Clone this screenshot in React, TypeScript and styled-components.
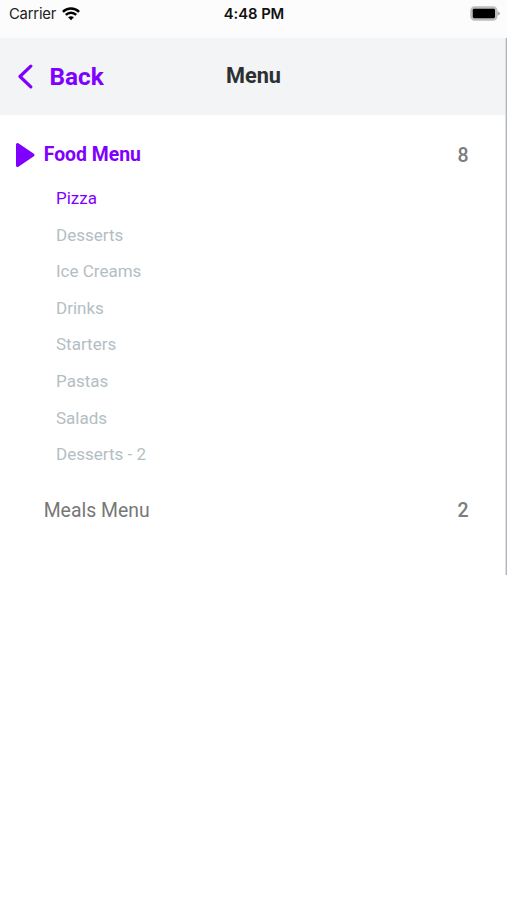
import React from "react";
import styled, { createGlobalStyle } from "styled-components";

const Global = createGlobalStyle`
  * { box-sizing: border-box; }
  body { margin: 0; background: #fff; }
`;
const Screen = styled.div`
  width: 507px; height: 900px; position: relative; overflow: hidden;
  background: #fff; font-family: Roboto, sans-serif;
`;
const StatusBar = styled.div`
  height: 38px; padding: 0 6px 10px 9px; display: grid;
  grid-template-columns: 1fr auto 1fr; align-items: center;
  font: 14.8px/28px Inter, sans-serif; color: #222; background: #fcfcfc;
`;
const Carrier = styled.div`
  display: flex; align-items: center; gap: 6px; letter-spacing: -0.2px;
`;
const Clock = styled.div`
  font-weight: 600; margin-right: 2px; letter-spacing: -0.05px; color: #111;
`;
const Battery = styled.div`
  display: flex; justify-content: flex-end; margin-top: -1px;
`;
const Header = styled.header`
  height: 77px; background: #f2f4f6; display: grid;
  grid-template-columns: 1fr auto 1fr; align-items: center; padding: 0 18px;
`;
const Back = styled.div`
  display: flex; align-items: center; gap: 17px;
  color: #8000ff; font-size: 24.4px; font-weight: 700;
`;
const BackLabel = styled.span`padding-bottom: 1px; margin-left: -0.5px;`;
const Title = styled.h1`
  margin: 0; padding-bottom: 2px; font-size: 21.7px; font-weight: 700; color: #2d2f31;
`;
const Section = styled.div<{ $active?: boolean }>`
  display: flex; align-items: center; height: 40px; padding: 0 38.5px 0 15px;
  font-size: 19.4px; font-weight: ${(p) => (p.$active ? 700 : 400)};
  color: ${(p) => (p.$active ? "#8000ff" : "#777")};
`;
const Marker = styled.div`width: 28.7px; display: flex;`;
const Count = styled.div`
  margin-left: auto; padding-top: 1px; font-size: 19.5px; font-weight: 500; color: #7c7c7c;
`;
const List = styled.ul`
  list-style: none; margin: 0; padding: 5.5px 0 17.5px 56px;
`;
const Item = styled.li<{ $active?: boolean }>`
  height: 36.6px; line-height: 36.6px; font-size: 17px;
  color: ${(p) => (p.$active ? "#8000ff" : "#b3bec3")};
`;
const Content = styled.main`padding-top: 19.5px;`;
const ScrollThumb = styled.div`
  position: absolute; right: 0; top: 38px; width: 2px; height: 537px;
  background: linear-gradient(to right, #dcdfe4 50%, #b0b6c0 50%);
`;

const items = ["Pizza", "Desserts", "Ice Creams", "Drinks", "Starters", "Pastas", "Salads", "Desserts - 2"];

export default function App() {
  return (
    <Screen>
      <Global />
      <StatusBar>
        <Carrier>
          Carrier
          <svg width="18" height="14" viewBox="0 0 18 14" fill="none" stroke="#000" strokeWidth="2.4">
            <path d="M.9 4.8C5.4.3 12.6.3 17.1 4.8M3.8 7.9C6.7 5 11.3 5 14.2 7.9" />
            <path d="M6.1 10.3Q9 8 11.9 10.3L9 13.3Z" fill="#000" stroke="none" />
          </svg>
        </Carrier>
        <Clock>4:48 PM</Clock>
        <Battery>
          <svg width="31" height="15" viewBox="0 0 31 15">
            <rect x=".9" y=".9" width="26" height="13.2" rx="3.8" fill="#bcbcbc" stroke="#bcbcbc" strokeWidth="1.2" />
            <rect x="2.8" y="2.8" width="22.2" height="9.4" rx="1.4" />
            <path d="M27.5 5L30.5 7.5L27.5 10Z" fill="#aaa" />
          </svg>
        </Battery>
      </StatusBar>
      <Header>
        <Back>
          <svg width="15" height="25" viewBox="0 0 15 25" fill="none" stroke="currentColor" strokeWidth="3.2" strokeLinecap="round" strokeLinejoin="round">
            <path d="M12.8 2.2L2 12.5L12.8 22.8" />
          </svg>
          <BackLabel>Back</BackLabel>
        </Back>
        <Title>Menu</Title>
        <span />
      </Header>
      <Content>
        <Section $active>
          <Marker>
            <svg width="20" height="26" viewBox="0 0 20 26" fill="currentColor" stroke="currentColor" strokeWidth="3" strokeLinejoin="round">
              <path d="M2.5 2.5V23.5L18 13Z" />
            </svg>
          </Marker>
          Food Menu<Count>8</Count>
        </Section>
        <List>
          {items.map((name, i) => <Item key={name} $active={i === 0}>{name}</Item>)}
        </List>
        <Section><Marker />Meals Menu<Count>2</Count></Section>
      </Content>
      <ScrollThumb />
    </Screen>
  );
}
